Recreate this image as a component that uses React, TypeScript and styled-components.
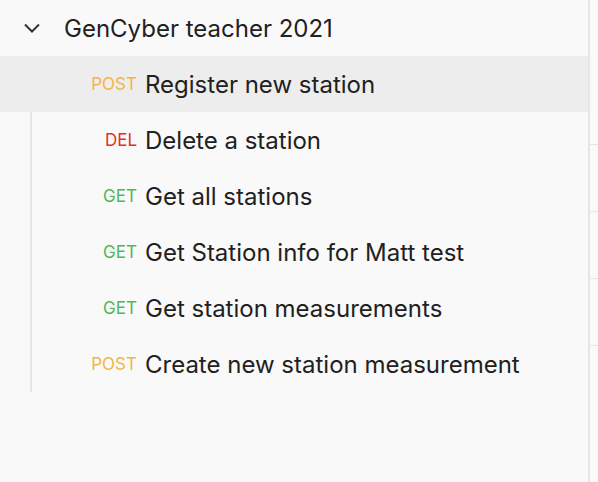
import React from "react";
import styled, { createGlobalStyle } from "styled-components";

const Global = createGlobalStyle`
  html, body { margin: 0; padding: 0; height: 100%; }
  body { background: #f9f9f9; font-family: Inter, "Noto Sans", sans-serif; -webkit-font-smoothing: antialiased; }
  #root { height: 100%; }
`;

const Page = styled.div`
  display: flex;
  height: 100vh;
  overflow: hidden;
`;

const Sidebar = styled.div`
  width: 588px;
  flex: none;
  background: #f9f9f9;
  border-right: 2px solid #e6e6e6;
  display: flex;
  flex-direction: column;
`;

const Main = styled.div`
  flex: 1;
  background: #fafafa;
  padding-top: 144px;
  display: flex;
  flex-direction: column;
`;

const MainRow = styled.div`
  height: 66px;
  flex: none;
  border-top: 1px solid #e4e4e4;
`;

const FolderHeader = styled.div`
  height: 56px;
  display: flex;
  align-items: center;
  padding-left: 24px;
  gap: 24px;
  color: #212121;
  font-size: 24px;
`;

const Chevron = styled.svg`
  width: 16px;
  height: 10px;
  flex: none;
`;

const Children = styled.div`
  margin-left: 30px;
  border-left: 2px solid #e6e6e6;
  display: flex;
  flex-direction: column;
`;

const ItemRow = styled.div<{ $selected?: boolean }>`
  height: 56px;
  display: flex;
  align-items: center;
  gap: 8px;
  margin-left: -32px;
  padding-left: 32px;
  background: ${(p) => (p.$selected ? "#ededed" : "transparent")};
`;

const Method = styled.span<{ $color: string }>`
  width: 105px;
  flex: none;
  text-align: right;
  color: ${(p) => p.$color};
  font-size: 17px;
`;

const Name = styled.span`
  color: #212121;
  font-size: 24px;
  white-space: nowrap;
`;

const COLORS: Record<string, string> = {
  POST: "#f6b445",
  DEL: "#e0302a",
  GET: "#4fb85a",
};

const items = [
  { m: "POST", n: "Register new station", sel: true },
  { m: "DEL", n: "Delete a station" },
  { m: "GET", n: "Get all stations" },
  { m: "GET", n: "Get Station info for Matt test" },
  { m: "GET", n: "Get station measurements" },
  { m: "POST", n: "Create new station measurement" },
];

export default function App() {
  return (
    <>
      <Global />
      <Page>
        <Sidebar>
          <FolderHeader>
            <Chevron viewBox="0 0 16 10">
              <path d="M1 1.5 L8 8.5 L15 1.5" fill="none" stroke="#333" strokeWidth="2" />
            </Chevron>
            <span>GenCyber teacher 2021</span>
          </FolderHeader>
          <Children>
            {items.map((it, i) => (
              <ItemRow key={i} $selected={it.sel}>
                <Method $color={COLORS[it.m]}>{it.m}</Method>
                <Name>{it.n}</Name>
              </ItemRow>
            ))}
          </Children>
        </Sidebar>
        <Main>
          <MainRow />
          <MainRow />
          <MainRow />
          <MainRow />
        </Main>
      </Page>
    </>
  );
}
